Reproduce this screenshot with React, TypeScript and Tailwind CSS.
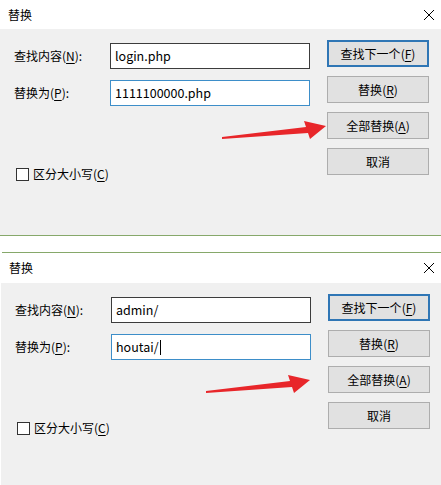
import type { ReactNode } from 'react';

const font = { fontFamily: '"Noto Sans CJK SC", "Noto Sans", sans-serif' };

const Key = ({ k }: { k: string }) => (
    <span>
        (<u className="underline-offset-2">{k}</u>)
    </span>
);

const CloseIcon = () => (
    <svg width="12" height="12" viewBox="0 0 12 12" className="text-black">
        <path d="M1 1 L11 11 M11 1 L1 11" stroke="currentColor" strokeWidth="1" fill="none" />
    </svg>
);

const Button = ({ children, primary }: { children: ReactNode; primary?: boolean }) => (
    <div
        className={`flex h-[27px] w-[102px] items-center justify-center bg-[#e1e1e1] text-[12px] text-black ${
            primary ? 'border-2 border-[#2f76b5]' : 'border border-[#adadad]'
        }`}
    >
        {children}
    </div>
);

interface DialogProps {
    find: string;
    replace: string;
    caret?: boolean;
    titleH: string;
    bodyH: string;
}

const Dialog = ({ find, replace, caret, titleH, bodyH }: DialogProps) => (
    <div className="flex flex-col">
        <div className={`flex items-center justify-between bg-white pl-[8px] pr-[6px] ${titleH}`}>
            <span className="text-[12px] text-black">替换</span>
            <CloseIcon />
        </div>
        <div className={`flex bg-[#f0f0f0] pl-[14px] pt-[11px] ${bodyH}`}>
            <div className="mt-[3px] flex flex-col">
                <div className="flex items-center">
                    <span className="w-[96px] text-[12px] text-black">
                        查找内容<Key k="N" />:
                    </span>
                    <div className="flex h-[26px] w-[200px] items-center border border-[#3c3c3c] bg-white pl-[4px] text-[12.5px] text-black">
                        {find}
                    </div>
                </div>
                <div className="mt-[11px] flex items-center">
                    <span className="w-[96px] text-[12px] text-black">
                        替换为<Key k="P" />:
                    </span>
                    <div className="flex h-[26px] w-[200px] items-center border border-[#3d8ec9] bg-white pl-[4px] text-[12.5px] text-black">
                        {replace}
                        {caret && <span className="ml-px h-[15px] w-px bg-black" />}
                    </div>
                </div>
                <div className="ml-[2px] mt-[59px] flex items-center gap-[4px]">
                    <div className="h-[13px] w-[13px] border border-[#333] bg-white" />
                    <span className="text-[12px] text-black">
                        区分大小写<Key k="C" />
                    </span>
                </div>
            </div>
            <div className="ml-[17px] flex flex-col gap-[9px]">
                <Button primary>
                    查找下一个<Key k="F" />
                </Button>
                <Button>
                    替换<Key k="R" />
                </Button>
                <Button>
                    全部替换<Key k="A" />
                </Button>
                <Button>取消</Button>
            </div>
        </div>
    </div>
);

const Arrow = ({ className }: { className: string }) => (
    <svg width="110" height="22" viewBox="0 0 110 22" className={`absolute ${className}`}>
        <polygon points="0,17 84,7 82,1 104,6 88,19 86,13 0,19" fill="#e8262a" />
    </svg>
);

export default function App() {
    return (
        <div className="relative h-[485px] w-[441px] overflow-hidden bg-white" style={font}>
            <Dialog find="login.php" replace="1111100000.php" titleH="h-[29px]" bodyH="h-[206px]" />
            <div className="h-px bg-[#86a86a]" />
            <div className="h-[16px] bg-white" />
            <div className="ml-[2px] h-px bg-[#86a86a]" />
            <div className="ml-px">
                <Dialog find="admin/" replace="houtai/" caret titleH="h-[30px]" bodyH="h-[210px]" />
            </div>
            <Arrow className="left-[222px] top-[120px]" />
            <Arrow className="left-[200px] top-[374px] w-[122px]" />
        </div>
    );
}
